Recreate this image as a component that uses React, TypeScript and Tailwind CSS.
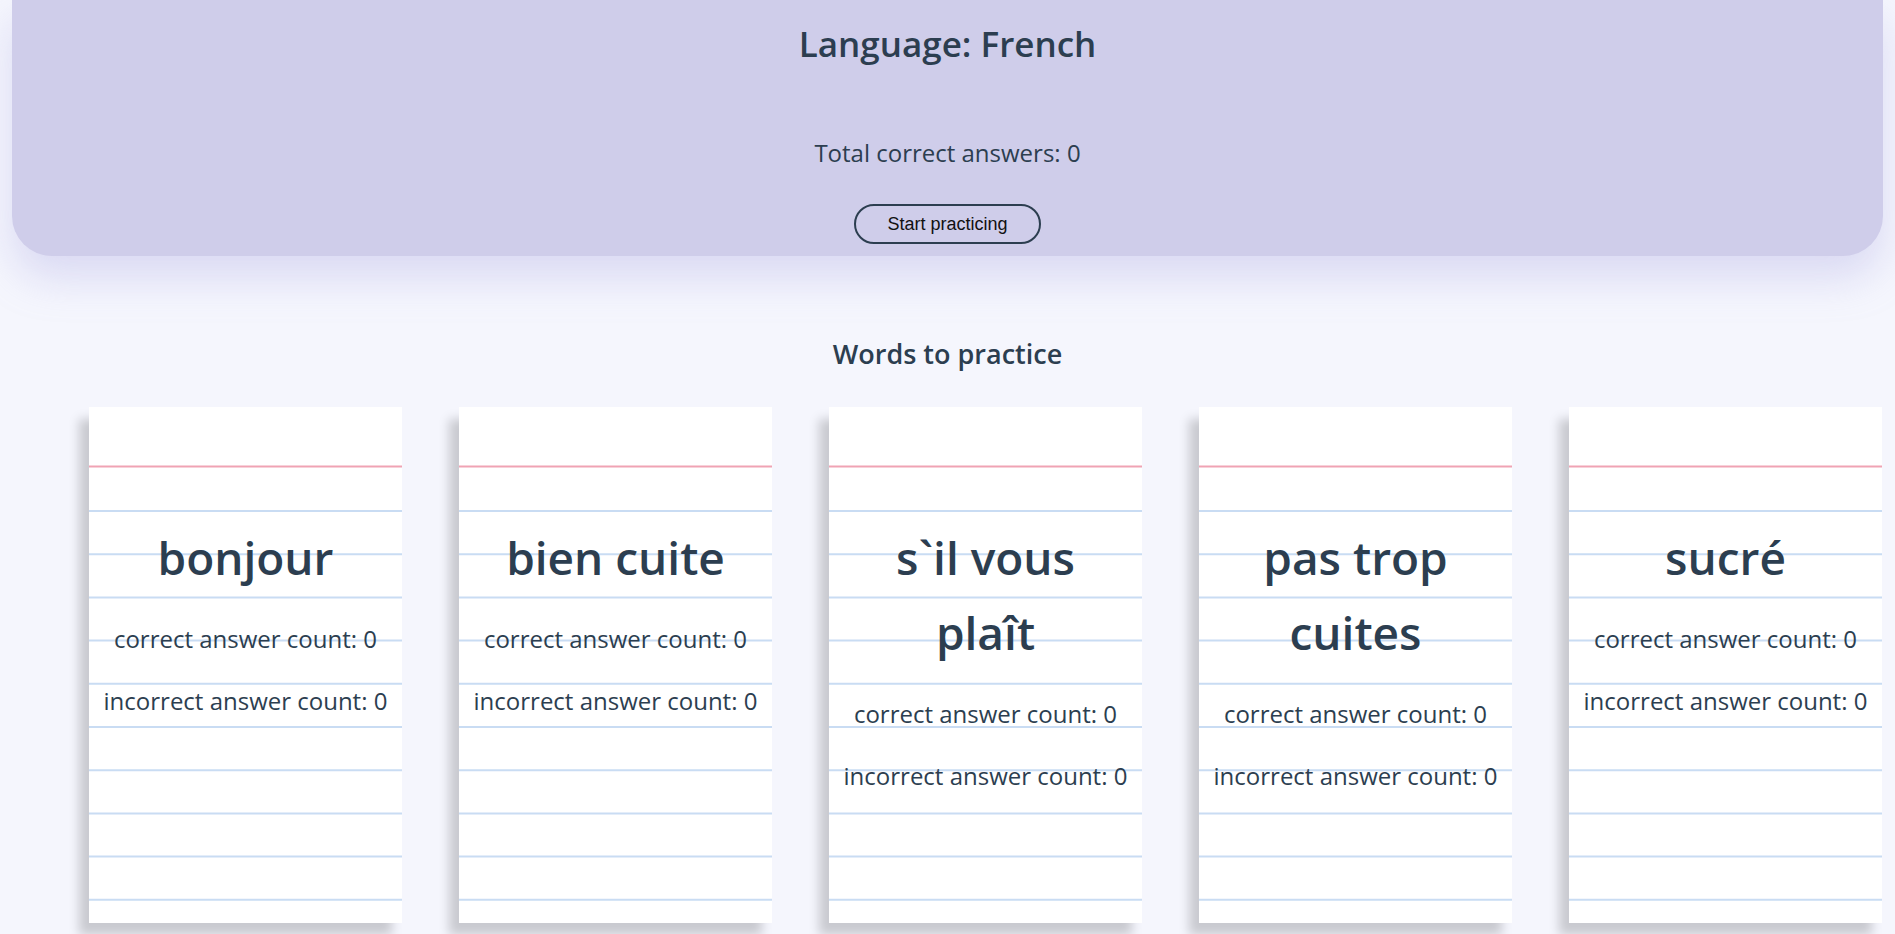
const words = ["bonjour", "bien cuite", "s`il vous plaît", "pas trop cuites", "sucré"];

const PaperLines = () => (
  <svg className="absolute inset-0 h-full w-full" preserveAspectRatio="none" viewBox="0 0 313 516">
    <line x1="0" y1="59.5" x2="313" y2="59.5" stroke="#f0a3b4" strokeWidth="2" />
    {Array.from({ length: 10 }).map((_, i) => (
      <line key={i} x1="0" y1={104 + i * 43.2} x2="313" y2={104 + i * 43.2} stroke="#c9dcf3" strokeWidth="2" />
    ))}
  </svg>
);

const WordCard = ({ word }: { word: string }) => (
  <div className="relative w-[313px] h-[516px] shrink-0 bg-white shadow-[-10px_12px_10px_rgba(0,0,0,0.18)]">
    <PaperLines />
    <div className="relative flex flex-col items-center pt-[113px] text-center">
      <h2 className="px-[24px] text-[46px] leading-[75px] font-semibold">{word}</h2>
      <p className="mt-[27px] text-[24px] leading-[33px]">correct answer count: 0</p>
      <p className="mt-[29px] text-[24px] leading-[33px]">incorrect answer count: 0</p>
    </div>
  </div>
);

export default function App() {
  return (
    <div className="min-h-screen bg-[#f5f6fd] text-[#2c3e50] font-['Open_Sans',sans-serif] overflow-hidden">
      {/* Header */}
      <header className="mx-3 flex flex-col items-center rounded-b-[40px] bg-[#cfcdea] pt-[22px] pb-[12px] shadow-[0_22px_40px_rgba(170,165,225,0.35)]">
        <h1 className="text-[35px] leading-[44px] font-semibold">Language: French</h1>
        <p className="mt-[71px] text-[24px] leading-[32px]">Total correct answers: 0</p>
        <button className="mt-[35px] h-[40px] rounded-full border-2 border-[#2c3e50] px-[31px] font-['Liberation_Sans',Arial,sans-serif] text-[18px] text-[#111]">
          Start practicing
        </button>
      </header>

      {/* Words */}
      <h3 className="mt-[82px] text-center text-[27px] leading-[32px] font-semibold">Words to practice</h3>
      <div className="mt-[37px] flex gap-[57px] pl-[89px]">
        {words.map((w) => (
          <WordCard key={w} word={w} />
        ))}
      </div>
    </div>
  );
}
